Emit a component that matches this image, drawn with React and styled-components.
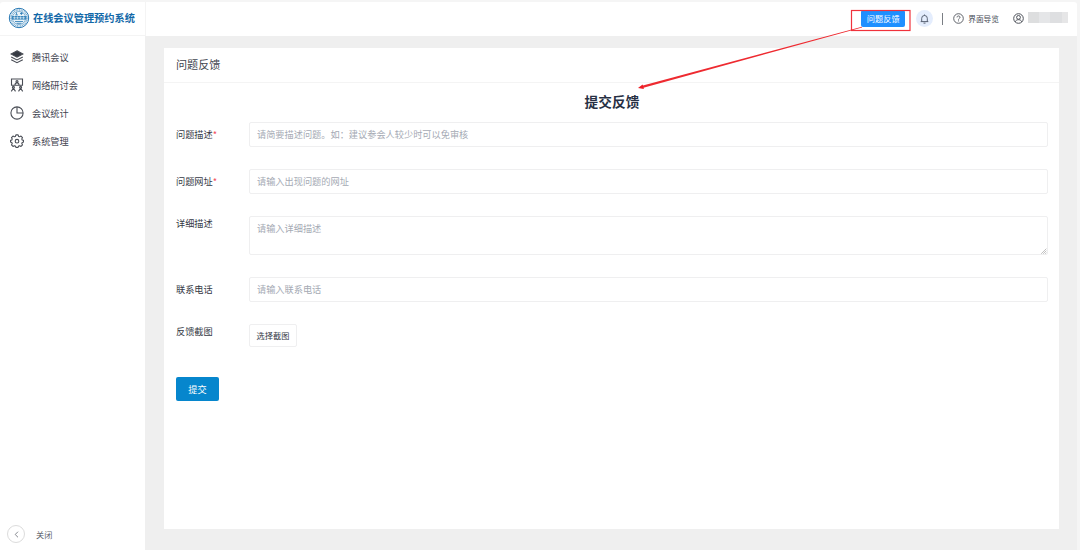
import React from 'react';
import styled, { createGlobalStyle } from 'styled-components';

const GlobalStyle = createGlobalStyle`
    * {
        box-sizing: border-box;
    }

    body {
        margin: 0;
        overflow: hidden;
        background: #f5f5f5;
        font-family: "Noto Sans CJK SC", sans-serif;
        color: #474b56;
    }

    input, textarea, button {
        font-family: inherit;
    }
`;

const Page = styled.div`
    position: relative;
    display: flex;
    flex-direction: column;
    width: 1080px;
    height: 550px;
    padding: 2px 3px 0 0;
    background: #f5f5f5;
`;

const Header = styled.header`
    display: flex;
    flex: none;
    height: 34px;
    background: #fff;
    border-radius: 3px 3px 0 0;
`;

const Brand = styled.div`
    display: flex;
    align-items: center;
    gap: 3px;
    width: 146px;
    padding: 0 0 2px 8px;
    border-right: 1px solid #f4f4f4;
    border-bottom: 1px solid #f4f4f4;
`;

const BrandName = styled.span`
    font-size: 10.2px;
    line-height: 16px;
    font-weight: 700;
    color: #1268a8;
    white-space: nowrap;
`;

const Tools = styled.div`
    display: flex;
    flex: 1;
    align-items: center;
    justify-content: flex-end;
    padding-right: 9px;
    padding-bottom: 1px;
`;

const FeedbackButton = styled.button`
    width: 44px;
    height: 17px;
    padding: 0;
    border: 0;
    border-radius: 2px;
    background: #1e8fff;
    color: #fff;
    font-size: 8.2px;
    line-height: 17px;
`;

const Bell = styled.span`
    display: flex;
    align-items: center;
    justify-content: center;
    width: 17px;
    height: 17px;
    margin-left: 11px;
    border-radius: 50%;
    background: #e4edfd;
`;

const Divider = styled.span`
    width: 1px;
    height: 12px;
    margin: 1px 10px 0 9px;
    background: #7a7e84;
`;

const Guide = styled.span`
    display: flex;
    align-items: center;
    gap: 4px;
    margin-right: 14px;
    font-size: 7.7px;
    line-height: 12px;
`;

const HiddenName = styled.span`
    width: 40px;
    height: 11px;
    margin: 0 0 2px 4px;
    background: linear-gradient(90deg, #dddedf 0 11px, #e5e6e8 11px 22px, #dedfe1 22px 34px, #e6e6e7 34px);
`;

const Body = styled.div`
    display: flex;
    flex: 1;
    min-height: 0;
`;

const Sidebar = styled.nav`
    display: flex;
    flex-direction: column;
    flex: none;
    width: 145px;
    padding: 7px 0 7px;
    background: #fff;
`;

const MenuItem = styled.div`
    display: flex;
    align-items: center;
    gap: 8px;
    height: 28px;
    padding-left: 10px;
    font-size: 9.2px;
    line-height: 14px;
    color: #3f4450;
`;

const Collapse = styled.div`
    display: flex;
    align-items: center;
    gap: 11px;
    margin-top: auto;
    padding-left: 7px;
    font-size: 8.2px;
    line-height: 12px;
    color: #62666e;
`;

const CollapseCircle = styled.span`
    display: flex;
    align-items: center;
    justify-content: center;
    width: 18px;
    height: 18px;
    border: 1px solid #dcdcdc;
    border-radius: 50%;
`;

const CollapseText = styled.span`
    padding-bottom: 1px;
`;

const Content = styled.main`
    display: flex;
    flex: 1;
    padding: 12px 18px 21px 19px;
    background: #efefef;
`;

const Card = styled.section`
    display: flex;
    flex: 1;
    flex-direction: column;
    background: #fff;
`;

const CardTitle = styled.h1`
    height: 35px;
    margin: 0;
    padding-left: 12px;
    border-bottom: 1px solid #f4f4f4;
    font-size: 11.1px;
    font-weight: 400;
    line-height: 33px;
    color: #42464f;
`;

const Form = styled.form`
    display: flex;
    flex-direction: column;
    padding: 10px 11px 0 12px;
`;

const FormTitle = styled.h2`
    height: 18px;
    margin: 0 0 11px;
    font-size: 13.7px;
    font-weight: 700;
    line-height: 17px;
    text-align: center;
    color: #273044;
`;

const Row = styled.div`
    display: flex;
    align-items: flex-start;
    margin-bottom: ${props => props.$gap}px;
`;

const Label = styled.label`
    flex: none;
    width: 73px;
    padding-top: ${props => props.$top}px;
    font-size: 9.2px;
    line-height: 14px;
    color: #343945;
`;

const Required = styled.span`
    color: #f24a5c;
`;

const Field = styled.input`
    flex: 1;
    height: 25px;
    padding: 0 7px 2px;
    border: 1px solid #efeff0;
    border-radius: 2px;
    outline: none;
    background: #fff;
    font-size: 9.2px;

    &::placeholder {
        color: #a5aab4;
    }
`;

const Area = styled.textarea`
    flex: 1;
    height: 39px;
    padding: 4px 7px;
    border: 1px solid #efeff0;
    border-radius: 2px;
    outline: none;
    background: #fff;
    font-size: 9.2px;
    line-height: 14px;
    resize: none;

    &::placeholder {
        color: #a5aab4;
    }
`;

const AreaBox = styled.div`
    position: relative;
    display: flex;
    flex: 1;
`;

const Grip = styled.svg`
    position: absolute;
    right: 1px;
    bottom: 1px;
`;

const FileButton = styled.button`
    width: 48px;
    height: 23px;
    padding: 0 0 2px;
    border: 1px solid #efeff0;
    border-radius: 2px;
    background: #fff;
    color: #343945;
    font-size: 8.2px;
`;

const Submit = styled.button`
    width: 43px;
    height: 24px;
    padding: 0 0 1px;
    border: 0;
    border-radius: 2px;
    background: #0686cd;
    color: #fff;
    font-size: 9.2px;
`;

const Marker = styled.svg`
    position: absolute;
    left: 0;
    top: 0;
    pointer-events: none;
`;

const Logo = () => (
    <svg width="22" height="22" viewBox="0 0 22 22" fill="none" stroke="#2376b3">
        <circle cx="11" cy="11" r="9.7" strokeWidth="1" />
        <circle cx="11" cy="11" r="8" strokeWidth="1.5" strokeDasharray="1.1 .6" opacity=".6" />
        <circle cx="11" cy="11" r="6.6" fill="#e8f2f8" strokeWidth=".5" />
        <path d="M3.6 9h14.8v3.6H3.6z" fill="#3d88bd" stroke="none" />
        <path d="M5 10.8h12M6.5 9.4v2.8M9.5 9.4v2.8M12.5 9.4v2.8M15.5 9.4v2.8" stroke="#e8f2f8" strokeWidth=".6" />
        <path d="M8.5 5.3v2.4M7.3 7.9h2.6M13.4 5v3M12 6.5h2.8M7 14.5h8M8.5 16.3h5" strokeWidth=".8" />
    </svg>
);

const icons = {
    layers: (
        <>
            <path d="M7 .8 13 4 7 7.2 1 4z" fill="#363a43" />
            <path d="m1.2 6.9 5.8 3 5.8-3M1.2 9.7l5.8 3 5.8-3" />
        </>
    ),
    seminar: (
        <>
            <path d="M1.5 7.2V1h11v6.2zM5 6.9c0-2.7 4-2.7 4 0" />
            <circle cx="7" cy="3.6" r="1" />
            <circle cx="3.4" cy="9.2" r="1" />
            <circle cx="10.6" cy="9.2" r="1" />
            <path d="m1.3 13.4 2.1-3.2 2.1 3.2M8.5 13.4l2.1-3.2 2.1 3.2" />
        </>
    ),
    chart: (
        <>
            <circle cx="7" cy="7" r="6.1" />
            <path d="M7 1v6h6" />
        </>
    ),
    gear: (
        <>
            <path d="M5.9 .9h2.2l.5 1.5 1 .4 1.4-.7 1.5 1.5-.7 1.4.4 1 1.4.4v1.6l-1.4.5-.4 1 .7 1.4-1.5 1.5-1.4-.7-1 .4-.5 1.3H5.9l-.5-1.3-1-.4-1.4.7-1.5-1.5.7-1.4-.4-1-1.3-.5V6.4L1.8 6l.4-1-.7-1.4L3 2.1l1.4.7 1-.4z" strokeLinejoin="round" />
            <circle cx="7" cy="7.2" r="1.8" />
        </>
    ),
};

const menu = [
    { icon: 'layers', title: '腾讯会议' },
    { icon: 'seminar', title: '网络研讨会' },
    { icon: 'chart', title: '会议统计' },
    { icon: 'gear', title: '系统管理' },
];

const MenuIcon = (props) => (
    <svg width="14" height="14" viewBox="0 0 14 14" fill="none" stroke="#4a4e56" strokeWidth="1.1">
        {icons[props.name]}
    </svg>
);

const App = () => {
    return (
        <Page>
            <GlobalStyle />
            <Header>
                <Brand>
                    <Logo />
                    <BrandName>在线会议管理预约系统</BrandName>
                </Brand>
                <Tools>
                    <FeedbackButton>问题反馈</FeedbackButton>
                    <Bell>
                        <svg width="9" height="10" viewBox="0 0 9 10" fill="none" stroke="#4b5567" strokeWidth=".9">
                            <path d="M.7 7.6h7.6M1.7 7.4V4.3a2.8 2.8 0 0 1 5.6 0v3.1M4.5 1.5V.5M3.5 9.1h2" />
                        </svg>
                    </Bell>
                    <Divider />
                    <Guide>
                        <svg width="11" height="11" viewBox="0 0 11 11" fill="none" stroke="#4e525a" strokeWidth=".9">
                            <circle cx="5.5" cy="5.5" r="4.8" />
                            <path d="M4 4.4c0-2 3-1.9 3 0 0 1-1.5 1.1-1.5 2.2M5.5 7.4v1" />
                        </svg>
                        界面导览
                    </Guide>
                    <svg width="11" height="11" viewBox="0 0 11 11" fill="none" stroke="#4e525a" strokeWidth="1">
                        <circle cx="5.5" cy="5.5" r="4.8" />
                        <circle cx="5.5" cy="4.4" r="1.9" />
                        <path d="M2.2 8.8c.8-2.8 5.8-2.8 6.6 0" />
                    </svg>
                    <HiddenName />
                </Tools>
            </Header>
            <Body>
                <Sidebar>
                    {menu.map((item) => {
                        return (
                            <MenuItem key={item.icon}>
                                <MenuIcon name={item.icon} />
                                {item.title}
                            </MenuItem>
                        );
                    })}
                    <Collapse>
                        <CollapseCircle>
                            <svg width="5" height="7" viewBox="0 0 5 7" fill="none" stroke="#777b82" strokeWidth=".9">
                                <path d="M4 .7 1.2 3.5 4 6.3" />
                            </svg>
                        </CollapseCircle>
                        <CollapseText>关闭</CollapseText>
                    </Collapse>
                </Sidebar>
                <Content>
                    <Card>
                        <CardTitle>问题反馈</CardTitle>
                        <Form>
                            <FormTitle>提交反馈</FormTitle>
                            <Row $gap={22}>
                                <Label $top={5}>问题描述<Required>*</Required></Label>
                                <Field placeholder="请简要描述问题。如：建议参会人较少时可以免审核" />
                            </Row>
                            <Row $gap={22}>
                                <Label $top={5}>问题网址<Required>*</Required></Label>
                                <Field placeholder="请输入出现问题的网址" />
                            </Row>
                            <Row $gap={22}>
                                <Label $top={0}>详细描述</Label>
                                <AreaBox>
                                    <Area placeholder="请输入详细描述" />
                                    <Grip width="6" height="6" viewBox="0 0 6 6" stroke="#8d8d8d" strokeWidth=".9">
                                        <path d="M.5 5.5l5-5M2.5 5.5l3-3M4.5 5.5l1-1" strokeDasharray="1 .4" />
                                    </Grip>
                                </AreaBox>
                            </Row>
                            <Row $gap={22}>
                                <Label $top={5}>联系电话</Label>
                                <Field placeholder="请输入联系电话" />
                            </Row>
                            <Row $gap={30}>
                                <Label $top={0}>反馈截图</Label>
                                <FileButton type="button">选择截图</FileButton>
                            </Row>
                            <Submit type="button">提交</Submit>
                        </Form>
                    </Card>
                </Content>
            </Body>
            <Marker width="1080" height="100" viewBox="0 0 1080 100">
                <rect x="851.5" y="10.5" width="58.5" height="20" fill="none" stroke="#f0323c" strokeWidth="1.2" />
                <path d="M862 26.8 642 85.8l.6 2.1L862 27.4z" fill="#ee2a30" />
                <path d="m638 88 4.6-3.6 1.3 4.6z" fill="#ee1c24" />
            </Marker>
        </Page>
    );
};

export default App;
